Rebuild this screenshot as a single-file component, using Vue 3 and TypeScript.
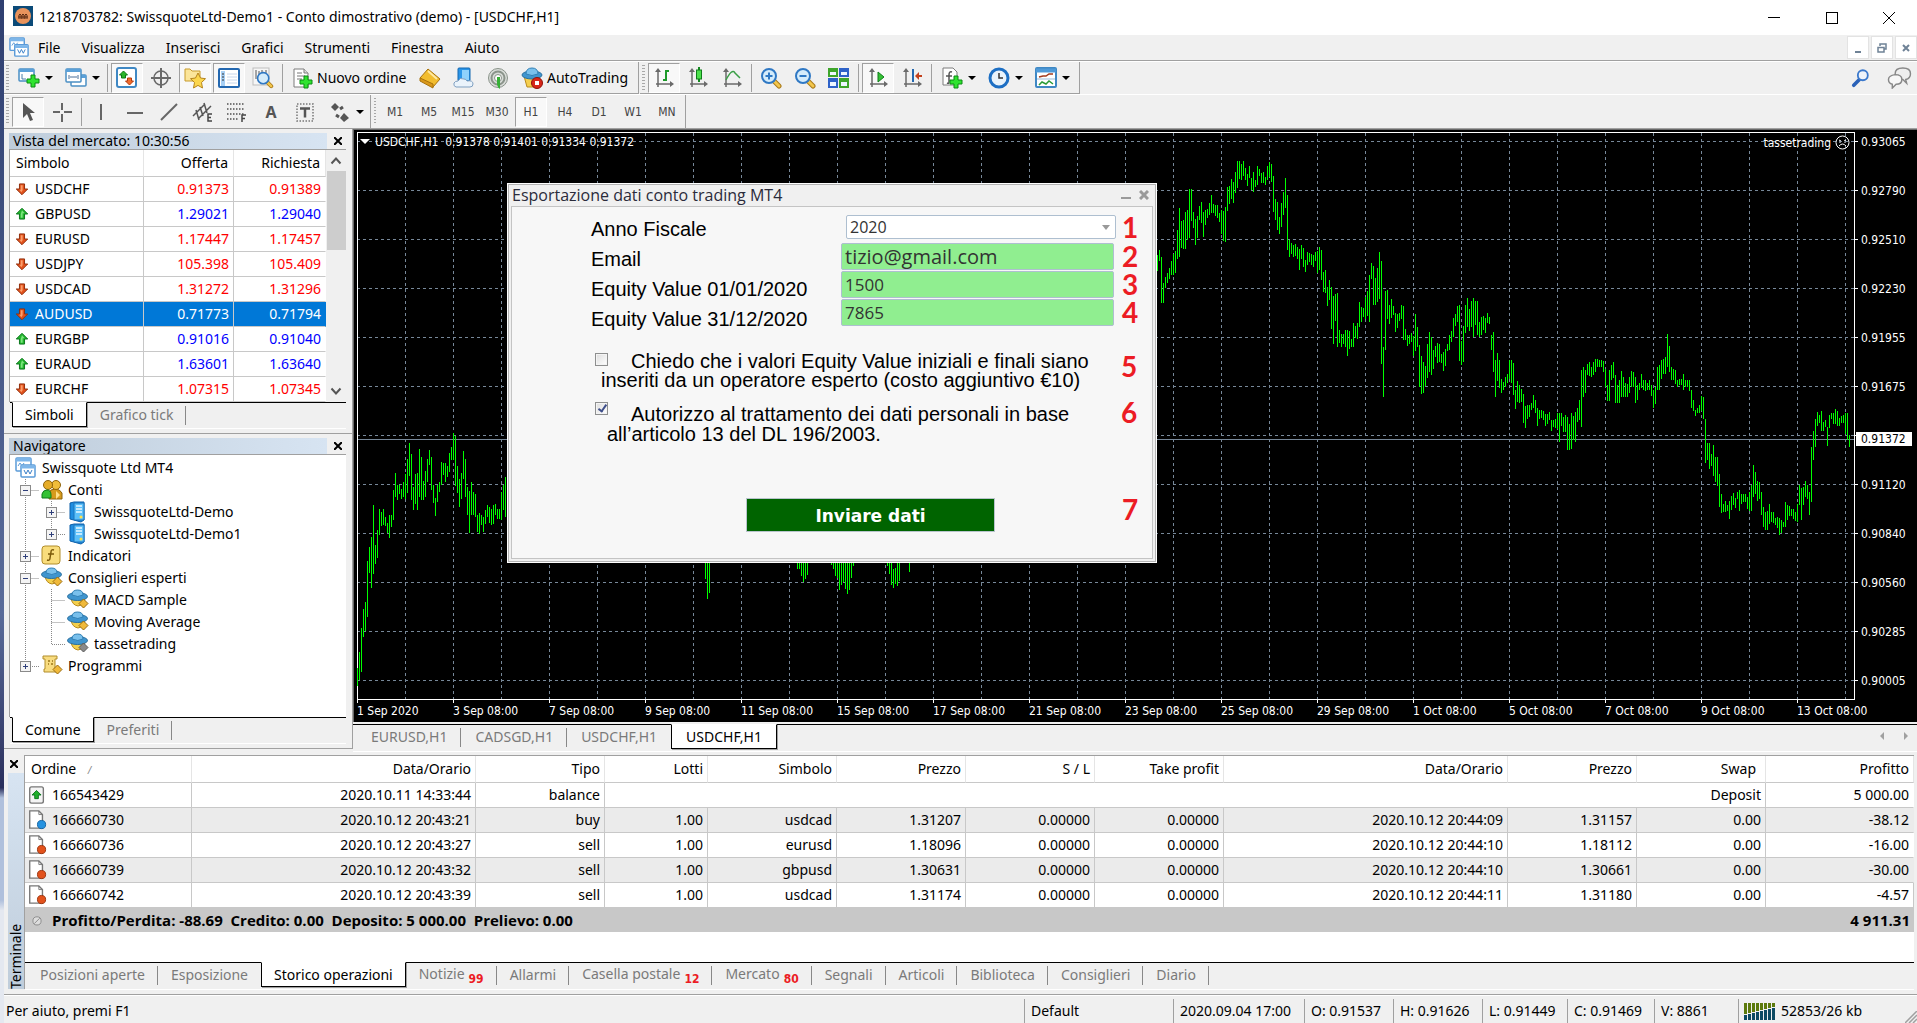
<script setup lang="ts">
import { ref } from 'vue'

/* ---------- icon drawings, all on a 22 x 22 field ---------- */
const win = (x: number, y: number, w: number, h: number) =>
  `<rect x="${x}" y="${y}" width="${w}" height="${h}" rx="1" fill="#fff" stroke="#4a8fc4" stroke-width="1.500"/><path d="M${x} ${y + 1.5}h${w}" stroke="#5aa0d8" stroke-width="3"/>`
const plus = (x: number, y: number) =>
  `<path d="M${x + 4} ${y}h4v4h4v4h-4v4h-4v-4h-4v-4h4z" fill="#2fe32f" stroke="#0a8a12"/>`
const hat = (gem: string) =>
  `<path d="M4 9q1 7 7 8q6-1 7-8z" fill="#f3cf4c" stroke="#b98a1c"/><ellipse cx="10.500" cy="7.500" rx="10" ry="4" fill="#3f95cf" stroke="#286f9f"/><path d="M5 6q0-5 5.500-5t5.500 5q-5 3-11 0z" fill="#79c0ec" stroke="#2f7fb5"/>${gem}`
const gem = (c: string, s: string) => `<path d="M16.500 10l4.500 4.500-4.500 4.500-4.500-4.500z" fill="${c}" stroke="${s}"/>`
const axes = '<path d="M5 4v16M3 17h15" stroke="#6a6a6a" stroke-width="1.500" fill="none"/><path d="M2 5l3-4 3 4zM17 14l4 3-4 3z" fill="#6a6a6a"/>'
const sheet = '<path d="M3 2h10l4 4v14h-14z" fill="#fff" stroke="#7d7d7d"/><path d="M13 2v4h4" fill="#ddd" stroke="#7d7d7d"/>'
const lens = (sign: string) =>
  `<path d="M13 13l6 6" stroke="#a87817" stroke-width="5" stroke-linecap="round"/><path d="M13 13l6 6" stroke="#f2c64c" stroke-width="3" stroke-linecap="round"/><circle cx="9" cy="9" r="7" fill="#d5ecfb" stroke="#2f78c4" stroke-width="2"/>${sign}`
const twoWin =
  '<rect x="1" y="1" width="15" height="13" rx="1" fill="#fff" stroke="#5a9ad8" stroke-width="1.500"/><path d="M1 3h15" stroke="#7db6ea" stroke-width="3"/><path d="M3 9l2-3 2 3 2-3" stroke="#5a9ad8" fill="none"/><rect x="6" y="8" width="14" height="12" rx="1" fill="#fff" stroke="#5a9ad8" stroke-width="1.500"/><path d="M6 10h14" stroke="#7db6ea" stroke-width="3"/><path d="M9 13l2 4 2-4 2 4 2-4" stroke="#3a7fc8" fill="none"/>'
const server =
  '<path d="M3 2l4-1h10v18l-3 2-11-3z" fill="#1f8de0" stroke="#0d5fa8"/><path d="M7 2h10v17h-10z" fill="#5cc0fa" stroke="#1b74bd"/><path d="M9 5h6M9 8h6M9 11h6" stroke="#e8f7ff" stroke-width="1.500"/><circle cx="14" cy="16" r="1.500" fill="#ffe14a"/>'

const icons: Record<string, string> = {
  newChart: win(1, 2, 15, 12) + '<path d="M4 7v5h4" stroke="#4a7fa8" fill="none"/>' + plus(9, 8),
  profiles: win(6, 8, 15, 11) + win(1, 2, 15, 13) + '<path d="M4 8v4M13 8v4M5 10h7" stroke="#4a6f98" fill="none"/>',
  market: '<rect x="1" y="1" width="19" height="19" rx="2" fill="#fff" stroke="#3f88c4" stroke-width="2"/><path d="M7.500 4l4 4h-2v3h-4v-3h-2z" fill="#2ab52a" stroke="#0b7a12"/><path d="M13.500 18l4-4h-2v-3h-4v3h-2z" fill="#f26b2b" stroke="#b33a0c"/>',
  cross: '<circle cx="11" cy="11" r="7" fill="none" stroke="#6a6a6a" stroke-width="1.500"/><path d="M11 1v20M1 11h20" stroke="#6a6a6a" stroke-width="2"/>',
  favorite: '<path d="M1 14v-12h5l2 2h8v10z" fill="#fbe59a" stroke="#c79b2c"/><path d="M14 6l2.500 5 5 .700-4 3.800 1 5.500-4.500-2.600-4.500 2.600 1-5.500-4-3.800 5-.700z" fill="#fbd64e" stroke="#b5841c"/>',
  window: '<rect x="1" y="2" width="20" height="18" rx="1" fill="#fff" stroke="#2468b0" stroke-width="2"/><path d="M3 4h4v15h-4z" fill="#a8d0f5"/><path d="M9 7h10M9 10h10M9 13h10M9 16h10" stroke="#c8d6ea"/><path d="M4 7h2M4 10h2M4 13h2" stroke="#333"/>',
  tester: '<rect x="1" y="1" width="16" height="17" fill="#f6f6f6" stroke="#bdbdbd"/><path d="M4 3v9M7 4v6M10 3v5M14 3v7" stroke="#555"/><g transform="translate(4 4) scale(.8)">' + lens('') + '</g>',
  order: sheet + '<path d="M6 6h5M6 9h8M6 12h5" stroke="#777"/>' + plus(9, 9),
  gold: '<path d="M1 11l8-9 12 10-7 8z" fill="#f2bd2f" stroke="#a8720c"/><path d="M1 11l13 6v4l-13-7z" fill="#d9981a" stroke="#a8720c"/><path d="M9 4l9 8" stroke="#ffe9a0" stroke-width="2"/>',
  cloud: '<rect x="5" y="1" width="12" height="13" rx="1" fill="#2a95e8" stroke="#1568b0"/><path d="M9 3h7v10h-7z" fill="#8fd2fc"/><path d="M3 20q-3-1-2-4 1-2 4-2 2-4 6-2 2 0 3 2 6-1 6 3 0 3-3 3z" fill="#eaf3fb" stroke="#7f9fc0"/>',
  signal: '<circle cx="11" cy="11" r="9.500" fill="#d8dcd8" stroke="#8a938a"/><circle cx="11" cy="11" r="6.500" fill="none" stroke="#8a938a" stroke-width="2"/><circle cx="11" cy="11" r="3.500" fill="#fff" stroke="#8a938a"/><path d="M10 10h3v12q-3-2-3-6z" fill="#35b035"/>',
  auto: '<path d="M3 9l3 11h10l3-11z" fill="#f5cf4e" stroke="#b98a1c"/><ellipse cx="11" cy="8" rx="10" ry="4" fill="#3f95cf" stroke="#286f9f"/><path d="M5 7q0-6 6-6t6 6q-6 3-12 0z" fill="#79c0ec" stroke="#2f7fb5"/><circle cx="16" cy="16" r="5.500" fill="#d8271a" stroke="#8f120a"/><rect x="14" y="14" width="4" height="4" fill="#fff"/>',
  bars: axes + '<path d="M13 3v11M10 13h3M13 4h3" stroke="#1d9a2a" stroke-width="2" fill="none"/>',
  candles: axes + '<path d="M12 0v15" stroke="#12891e" stroke-width="2"/><rect x="9.500" y="3" width="5" height="9" fill="#4be04b" stroke="#0f7d1a"/>',
  line: axes + '<path d="M5 13q6-12 9-7l5 5" stroke="#3a9e46" stroke-width="1.500" fill="none"/>',
  zoomIn: lens('<path d="M9 5.500v7M5.500 9h7" stroke="#2f78c4" stroke-width="2"/>'),
  zoomOut: lens('<path d="M5.500 9h7" stroke="#2f78c4" stroke-width="2"/>'),
  tile: '<path d="M0 1h10v9h-10z" fill="#3ea52a"/><path d="M11 1h10v9h-10z" fill="#2e62c8"/><path d="M0 11h10v10h-10z" fill="#2e62c8"/><path d="M11 11h10v10h-10z" fill="#3ea52a"/><path d="M2 5h6v3h-6zM13 5h6v3h-6zM2 15h6v4h-6zM13 15h6v4h-6z" fill="#eef6ff"/>',
  scroll: axes + '<path d="M11 5l6 5-6 5z" fill="#35c235" stroke="#0f7d1a"/>',
  shift: axes + '<path d="M12 2v13" stroke="#2468b0" stroke-width="2"/><path d="M21 9h-5" stroke="#c2401c" stroke-width="2"/><path d="M14 9l4-4v8z" fill="#c2401c"/>',
  indicator: '<path d="M2 1h10l4 4v13h-14z" fill="#fff" stroke="#7d7d7d"/><path d="M11 5q-3-1-3 3v7q0 2-2 1M5 9h6" stroke="#555" fill="none" stroke-width="1.500"/>' + plus(9, 9),
  clock: '<circle cx="11" cy="11" r="9" fill="#e9f3fb" stroke="#1d6fc4" stroke-width="3"/><path d="M11 6v5h4" stroke="#333" stroke-width="1.500" fill="none"/>',
  template: '<rect x="1" y="1" width="20" height="19" rx="1" fill="#fff" stroke="#3f88c4" stroke-width="2"/><path d="M1 3.500h20" stroke="#4f9ad8" stroke-width="4"/><path d="M4 10l4-1 3 0 3-2 4 0" stroke="#a23a1c" stroke-width="1.500" fill="none"/><path d="M2 12h18" stroke="#9bbbd8"/><path d="M4 18l3-3 4 2 3-3 4 3" stroke="#2a9a35" stroke-width="1.500" fill="none"/>',
  pointer: '<path d="M6 2v15l4-4 3 7 3-1-3-7h5z" fill="#555"/>',
  plusLine: '<path d="M11 2v7M11 13v8M2 11h7M13 11h8" stroke="#666" stroke-width="2"/>',
  vline: '<path d="M11 3v16" stroke="#666" stroke-width="2"/>',
  hline: '<path d="M3 12h16" stroke="#666" stroke-width="2"/>',
  trend: '<path d="M3 19l16-16" stroke="#666" stroke-width="2"/>',
  channel: '<path d="M1 15l12-12M6 18l13-13M4 9l3 10M8 6l3 9M12 2l3 10" stroke="#555" stroke-width="1.500" fill="none"/><path d="M20 13h-4v7h4M16 16.500h3" stroke="#444" stroke-width="1.500" fill="none"/>',
  fibo: '<path d="M1 3h18M1 8h18M1 13h18M1 18h12" stroke="#777" stroke-width="2" stroke-dasharray="1.500 1.500"/><path d="M20 14h-4v7M16 17.500h3" stroke="#444" stroke-width="1.500" fill="none"/>',
  label: '<rect x="3" y="3" width="16" height="17" fill="none" stroke="#777" stroke-dasharray="1.500 1.500" stroke-width="1.500"/><path d="M6 7.500h10M11 7.500v9" stroke="#555" stroke-width="2.500"/>',
  arrows: '<path d="M6 2l4 4-4 4-4-4zM15 12l5 5-5 4-4-4z" fill="#555"/><path d="M7 14l3 2M11 8l3-2" stroke="#555" stroke-width="3"/>',
  twoWin, server,
  accounts: '<path d="M8 20v-6q1-4 6-4t7 4v6z" fill="#d69a1c" stroke="#8f640c"/><circle cx="15" cy="6" r="4.500" fill="#f0bd3a" stroke="#8f640c"/><circle cx="7" cy="6" r="4.500" fill="#e5ac28" stroke="#8f640c"/><path d="M1 19v-4q1-4 5-4t4 5v3z" fill="#35c235" stroke="#0f7d1a"/><path d="M15 12l4 4-4 4z" fill="#ffe08a"/>',
  fx: '<rect x="1" y="1" width="18" height="18" rx="3" fill="#f9dd7c" stroke="#b18d2b"/><path d="M13 5q-3-1-3 2l-1 6q0 3-3 2M7 9h6" stroke="#7c5a0a" stroke-width="1.500" fill="none"/>',
  expert: hat(gem('#f0b93a', '#9a6c0f')),
  expertOff: hat(gem('#8a8a8a', '#5a5a5a')),
  script: '<path d="M2 1h14v3h-2v10h3v3h-14v-3h1v-10h-2z" fill="#f8dc80" stroke="#b18d2b"/><path d="M7 6h2M11 6h1M7 9h1M10 9h2" stroke="#9a7518" stroke-width="1.500"/>' + gem('#f0b93a', '#9a6c0f'),
  up: '<path d="M11 2l9 9h-5v8h-8v-8h-5z" fill="#22b52c" stroke="#08731a" stroke-width="1.500"/><path d="M11 5l4 5h-3v7h-3v-6z" fill="#7de67f"/>',
  down: '<path d="M11 20l9-9h-5v-8h-8v8h-5z" fill="#e2521c" stroke="#8f2b08" stroke-width="1.500"/><path d="M9 5h3v8l-2 3-3-4h2z" fill="#fba06d"/>',
  balance: '<rect x="3" y="2" width="15" height="18" rx="2" fill="#f4f4f4" stroke="#777" stroke-width="1.500"/><path d="M10.500 6l5 5h-3v4h-4v-4h-3z" fill="#1fae2a" stroke="#08731a"/>',
  buy: '<path d="M3 1h10l4 4v15h-14z" fill="#fff" stroke="#777" stroke-width="1.500"/><path d="M13 1v4h4" fill="none" stroke="#777"/><circle cx="16" cy="16" r="4.500" fill="#2592e0" stroke="#0f5f9f"/>',
  sell: '<path d="M3 1h10l4 4v15h-14z" fill="#fff" stroke="#777" stroke-width="1.500"/><path d="M13 1v4h4" fill="none" stroke="#777"/><circle cx="16" cy="16" r="4.500" fill="#e2521c" stroke="#96300a"/>',
  search: '<path d="M9 13l-6 6" stroke="#2a62b8" stroke-width="4" stroke-linecap="round"/><circle cx="13" cy="8" r="5.500" fill="#eef3fa" stroke="#3a78cc" stroke-width="2"/>',
  chat: '<path d="M14 1q8 0 8 6 0 5-5 6l1 4-4-4q-8 0-8-6t8-6z" fill="#eee" stroke="#888" stroke-width="1.500"/><path d="M6 8q7 0 7 5t-6 5l-4 4v-4q-4-1-4-5t7-5z" fill="#f7f7f7" stroke="#888" stroke-width="1.500"/>',
}

const menus = ['File', 'Visualizza', 'Inserisci', 'Grafici', 'Strumenti', 'Finestra', 'Aiuto']

interface Tool { icon?: string; text?: string; on?: boolean; menu?: boolean; sep?: boolean; title?: string }
const standardTools: Tool[] = [
  { icon: 'newChart', menu: true, title: 'Nuovo grafico' }, { icon: 'profiles', menu: true, title: 'Profili' }, { sep: true },
  { icon: 'market', on: true, title: 'Vista del mercato' }, { icon: 'cross', title: 'Finestra dati' },
  { icon: 'favorite', on: true, title: 'Navigatore' }, { icon: 'window', on: true, title: 'Terminale' },
  { icon: 'tester', title: 'Tester strategia' }, { sep: true },
  { icon: 'order', text: 'Nuovo ordine' }, { icon: 'gold', title: 'MetaEditor' }, { icon: 'cloud', title: 'Hosting' },
  { icon: 'signal', title: 'Segnali' }, { icon: 'auto', text: 'AutoTrading' },
]
const chartTools: Tool[] = [
  { icon: 'bars', on: true, title: 'Barre' }, { icon: 'candles', title: 'Candele' }, { icon: 'line', title: 'Linea' }, { sep: true },
  { icon: 'zoomIn', title: 'Ingrandisci' }, { icon: 'zoomOut', title: 'Riduci' }, { icon: 'tile', title: 'Affianca' }, { sep: true },
  { icon: 'scroll', on: true, title: 'Scorrimento' }, { icon: 'shift', title: 'Spostamento' }, { sep: true },
  { icon: 'indicator', menu: true, title: 'Indicatori' }, { icon: 'clock', menu: true, title: 'Periodi' }, { icon: 'template', menu: true, title: 'Modelli' },
]
const lineTools: Tool[] = [
  { icon: 'pointer', on: true, title: 'Cursore' }, { icon: 'plusLine', title: 'Mirino' }, { sep: true },
  { icon: 'vline', title: 'Linea verticale' }, { icon: 'hline', title: 'Linea orizzontale' }, { icon: 'trend', title: 'Trendline' },
  { icon: 'channel', title: 'Canale' }, { icon: 'fibo', title: 'Fibonacci' }, { text: 'A', title: 'Testo' },
  { icon: 'label', title: 'Etichetta' }, { icon: 'arrows', menu: true, title: 'Frecce' },
]
const periods = ['M1', 'M5', 'M15', 'M30', 'H1', 'H4', 'D1', 'W1', 'MN']
const period = ref('H1')

const quotes = [
  ['USDCHF', '0.91373', '0.91389', 'down'], ['GBPUSD', '1.29021', '1.29040', 'up'],
  ['EURUSD', '1.17447', '1.17457', 'down'], ['USDJPY', '105.398', '105.409', 'down'],
  ['USDCAD', '1.31272', '1.31296', 'down'], ['AUDUSD', '0.71773', '0.71794', 'down'],
  ['EURGBP', '0.91016', '0.91040', 'up'], ['EURAUD', '1.63601', '1.63640', 'up'],
  ['EURCHF', '1.07315', '1.07345', 'down'],
]
const selected = ref('AUDUSD')

/* guide: path of the dotted connectors; box: x of the expander; open: shows a minus */
interface Node { name: string; icon: string; pad: number; guide: string; box?: number; open?: boolean }
const tree: Node[] = [
  { name: 'Swissquote Ltd MT4', icon: 'twoWin', pad: 5, guide: '' },
  { name: 'Conti', icon: 'accounts', pad: 31, guide: 'M15.500 0v22M15.500 11.500h14', box: 10, open: true },
  { name: 'SwissquoteLtd-Demo', icon: 'server', pad: 57, guide: 'M15.500 0v22M41.500 0v22M41.500 11.500h14', box: 36 },
  { name: 'SwissquoteLtd-Demo1', icon: 'server', pad: 57, guide: 'M15.500 0v22M41.500 0v11.500h14', box: 36 },
  { name: 'Indicatori', icon: 'fx', pad: 31, guide: 'M15.500 0v22M15.500 11.500h14', box: 10 },
  { name: 'Consiglieri esperti', icon: 'expert', pad: 31, guide: 'M15.500 0v22M15.500 11.500h14', box: 10, open: true },
  { name: 'MACD Sample', icon: 'expert', pad: 57, guide: 'M15.500 0v22M41.500 0v22M41.500 11.500h14' },
  { name: 'Moving Average', icon: 'expert', pad: 57, guide: 'M15.500 0v22M41.500 0v22M41.500 11.500h14' },
  { name: 'tassetrading', icon: 'expertOff', pad: 57, guide: 'M15.500 0v22M41.500 0v11.500h14' },
  { name: 'Programmi', icon: 'script', pad: 31, guide: 'M15.500 0v11.500h14', box: 10 },
]

/* ---------- chart: one "high-low" pair per hourly bar, first number of a run is its bar index ---------- */
const runs: [number, string][] = [
  [0, '668-686 652-680 628-672 609-637 602-631 561-617 547-573 537-588 505-574 545-564 530-558 509-535 512-526 509-525 517-526 523-533 515-538 515-527 490-520 473-497 485-500 485-494 489-499 482-497 474-499 459-493 443-476 454-500 487-510 474-504 473-510 449-497 457-500 481-500 471-497 459-482 450-465 457-490 485-503 498-516 485-502 482-492 462-485 463-475 463-482 466-477 453-472 447-460 433-460 436-486 466-493 479-507 473-499 451-479 459-497 487-515 491-533 482-515 492-515 494-517 515-532 513-534 515-525 517-532 510-524 505-517 507-523 509-525 505-524 504-515 509-519 509-519 492-520 485-510 477-517'],
  [174, '540-579 540-599 540-593'],
  [220, '540-569 540-569 550-576 550-582 550-579 550-575'],
  [237, '540-565 540-569 550-576 550-578 550-590 550-585 550-582 550-589 550-594 550-590 550-578 550-566'],
  [265, '540-566 550-574 550-585 569-588 568-584 550-586 550-581'],
  [276, '540-572'],
  [400, '255-271 250-261 257-303 283-303 277-288 273-283 268-279 261-275 254-275 251-273 230-259 208-257 221-248 220-249 212-249 210-240 189-238 189-221 212-228 219-245 216-238 206-220 202-223 212-237 210-225 209-218 203-215 195-213 204-213 205-216 205-218 213-222 210-234 211-241 207-242 187-211 186-204 179-199 182-203 172-193 161-188 161-179 164-180 161-176 168-180 174-186 166-178 178-190 172-192 180-187 166-185 169-176 173-183 172-183 177-185 166-180 162-177 164-182 176-212 199-220 202-230 217-234 203-227 192-215 178-208 195-250 240-257 243-254 245-257 244-256 247-259 249-270 245-259 248-267 260-272 252-265 253-262 254-265 255-267 252-261 251-273 247-270 250-280 272-292 270-293 287-306 280-300 287-329 296-344 294-321 293-347 330-343 334-347 334-344 330-347 330-356 331-349 339-347 323-347 326-338'],
  [500, '323-339 302-327 307-322 308-317 297-319 291-316 275-322 263-279 266-305 278-305 268-302 252-299 261-364 347-397 291-350 290-319 305-324 299-318 306-315 313-332 314-328 313-321 305-319 306-340 329-340 335-346 335-344 333-342 336-356 314-351 327-347 345-387 356-394 362-393 366-386 344-378 332-372 337-375 350-369 346-357 343-363 344-362 354-363 352-371 349-366 344-351 335-350 331-342 318-337 314-326 306-322 305-361 341-365 326-362 305-333 298-327 309-331 301-327 298-337 301-325 301-335 322-337 317-335 316-330 318-333 313-323 317-324 335-350 332-372 360-397 353-381 360-388 379-393 382-390 377-387 374-383 360-379 360-383 363-395 390-409 381-402 385-403 389-402 394-423 406-428 405-419 405-417 403-410 395-408 400-413 408-426 410-419 410-418 411-420 414-426 414-424 412-420 420-431 420-427 419-428'],
  [600, '413-429 413-442 413-426 417-432 415-432 417-450 424-450 413-449 416-440 412-442 408-422 400-420 370-427 367-397 370-393 364-375 362-376 367-377 362-375 359-372 359-367 360-367 360-367 361-372 369-387 385-401 370-401 365-380 362-378 375-403 385-403 380-403 371-397 377-397 383-397 384-397 377-393 371-387 372-387 377-403 385-400 383-390 374-388 380-390 380-391 383-390 380-390 385-396 390-408 387-404 367-390 365-390 360-379 359-374 357-374 334-367 346-372 367-380 369-380 370-384 380-387 379-385 379-385 374-390 380-387 380-387 380-391 390-408 400-411 410-416 408-413 405-413 396-411 397-419 419-463 443-460 443-469 454-466 445-476 457-482 457-486 474-507 494-513 504-512 501-512 505-511 501-519 496-510 493-505 498-508 492-499 490-511 494-504 494-502 494-502 497-509 492-511 485-511 465-497 472-494'],
  [700, '481-501 482-499 492-515 507-527 512-530 511-530 504-524 512-522 512-523 518-525 517-528 518-535 520-533 522-527 502-527 505-520 506-516 509-516 509-519 512-521 504-522 485-505 488-520 487-505 481-497 485-499 492-515 447-502 431-460 419-447 412-426 415-423 411-431 422-431 420-427 427-446 415-428 413-419 413-424 409-424 411-426 418-426 416-423 415-423 413-434 413-440 435-447'],
]
const barPath = runs
  .map(([start, text]) =>
    text.split(' ').map((pair, i) => {
      const [top, bottom] = pair.split('-')
      return `M${(start + i) * 2 + 0.5} ${top}V${bottom}`
    }).join(''))
  .join('')
const gridX = Array.from({ length: 60 }, (_, i) => (i + 1) * 48)
const gridY = Array.from({ length: 12 }, (_, i) => 8 + i * 49)
const prices = ['0.93065', '0.92790', '0.92510', '0.92230', '0.91955', '0.91675', '', '0.91120', '0.90840', '0.90560', '0.90285', '0.90005']
const times = ['1 Sep 2020', '3 Sep 08:00', '7 Sep 08:00', '9 Sep 08:00', '11 Sep 08:00', '15 Sep 08:00', '17 Sep 08:00', '21 Sep 08:00', '23 Sep 08:00', '25 Sep 08:00', '29 Sep 08:00', '1 Oct 08:00', '5 Oct 08:00', '7 Oct 08:00', '9 Oct 08:00', '13 Oct 08:00']
const chartTabs = ['EURUSD,H1', 'CADSGD,H1', 'USDCHF,H1', 'USDCHF,H1']

const year = ref('2020')
const email = ref('tizio@gmail.com')
const equityStart = ref('1500')
const equityEnd = ref('7865')
const expertFill = ref(false)
const privacy = ref(true)

/* ---------- terminal ---------- */
const colWidths = [167, 284, 129, 103, 129, 129, 129, 129, 284, 129, 129, 148]
const heads = ['Data/Orario', 'Tipo', 'Lotti', 'Simbolo', 'Prezzo', 'S / L', 'Take profit', 'Data/Orario', 'Prezzo', 'Swap', 'Profitto']
const trades = [
  ['buy', '166660730', '2020.10.12 20:43:21', 'buy', '1.00', 'usdcad', '1.31207', '0.00000', '0.00000', '2020.10.12 20:44:09', '1.31157', '0.00', '-38.12'],
  ['sell', '166660736', '2020.10.12 20:43:27', 'sell', '1.00', 'eurusd', '1.18096', '0.00000', '0.00000', '2020.10.12 20:44:10', '1.18112', '0.00', '-16.00'],
  ['sell', '166660739', '2020.10.12 20:43:32', 'sell', '1.00', 'gbpusd', '1.30631', '0.00000', '0.00000', '2020.10.12 20:44:10', '1.30661', '0.00', '-30.00'],
  ['sell', '166660742', '2020.10.12 20:43:39', 'sell', '1.00', 'usdcad', '1.31174', '0.00000', '0.00000', '2020.10.12 20:44:11', '1.31180', '0.00', '-4.57'],
]
const terminalTabs: { name: string; count?: string; on?: boolean }[] = [
  { name: 'Posizioni aperte' }, { name: 'Esposizione' }, { name: 'Storico operazioni', on: true },
  { name: 'Notizie', count: '99' }, { name: 'Allarmi' }, { name: 'Casella postale', count: '12' },
  { name: 'Mercato', count: '80' }, { name: 'Segnali' }, { name: 'Articoli' }, { name: 'Biblioteca' },
  { name: 'Consiglieri' }, { name: 'Diario' },
]
const status: [string, number][] = [
  ['Default', 149], ['2020.09.04 17:00', 131], ['O: 0.91537', 89], ['H: 0.91626', 89],
  ['L: 0.91449', 85], ['C: 0.91469', 87], ['V: 8861', 84],
]
const traffic = Array.from({ length: 8 }, (_, i) => i)
</script>

<template>
  <div class="desktop">
    <div class="app">
      <header class="title-bar">
        <svg class="logo" width="20" height="20" viewBox="0 0 20 20"><rect width="20" height="20" fill="#0b4a78" /><circle cx="10" cy="10" r="8" fill="#e8935c" /><path d="M6 13v-4l1-1 1 1v4M9 13v-4l1-1 1 1v4M12 13v-4l1-1 1 1v4M5 11h10" stroke="#5a2c14" fill="none" /></svg>
        <h1>1218703782: SwissquoteLtd-Demo1 - Conto dimostrativo (demo) - [USDCHF,H1]</h1>
        <div class="window-controls">
          <button aria-label="Riduci a icona"><svg width="12" height="12"><path d="M0 5.500h12" stroke="#000" /></svg></button>
          <button aria-label="Ingrandisci"><svg width="12" height="12"><rect x=".5" y=".5" width="11" height="11" fill="none" stroke="#000" /></svg></button>
          <button aria-label="Chiudi"><svg width="12" height="12"><path d="M0 0l12 12M12 0l-12 12" stroke="#000" /></svg></button>
        </div>
      </header>

      <nav class="menu-bar">
        <svg class="menu-icon" width="21" height="21" viewBox="0 0 22 22" v-html="icons.twoWin" />
        <button v-for="m in menus" :key="m">{{ m }}</button>
        <div class="mdi-controls">
          <button aria-label="Riduci"><svg width="10" height="10"><path d="M2 9h6" stroke="#6f8296" stroke-width="2" /></svg></button>
          <button aria-label="Ripristina"><svg width="10" height="10"><path d="M3 3v-2h6v5h-2M1 4.500h6v4.500h-6z" stroke="#6f8296" fill="none" stroke-width="1.500" /></svg></button>
          <button aria-label="Chiudi grafico"><svg width="10" height="10"><path d="M2 2l6 6M8 2l-6 6" stroke="#6f8296" stroke-width="2" /></svg></button>
        </div>
      </nav>

      <div class="toolbars">
        <div class="tool-row">
          <div class="tool-group standard">
            <template v-for="(t, i) in standardTools" :key="i">
              <i v-if="t.sep" class="sep" />
              <button v-else class="tool" :class="{ on: t.on, menu: t.menu, wide: t.text }" :title="t.title">
                <svg width="22" height="22" viewBox="0 0 22 22" v-html="icons[t.icon!]" /><span v-if="t.text">{{ t.text }}</span>
              </button>
            </template>
          </div>
          <div class="tool-group charts">
            <template v-for="(t, i) in chartTools" :key="i">
              <i v-if="t.sep" class="sep" />
              <button v-else class="tool" :class="{ on: t.on, menu: t.menu }" :title="t.title">
                <svg width="22" height="22" viewBox="0 0 22 22" v-html="icons[t.icon!]" />
              </button>
            </template>
          </div>
          <div class="tool-end">
            <button aria-label="Cerca"><svg width="20" height="20" viewBox="0 0 22 22" v-html="icons.search" /></button>
            <button aria-label="Comunità"><svg width="28" height="22" viewBox="-3 0 26 23" v-html="icons.chat" /></button>
          </div>
        </div>
        <div class="tool-row second">
          <div class="tool-group lines">
            <template v-for="(t, i) in lineTools" :key="i">
              <i v-if="t.sep" class="sep" />
              <button v-else class="tool" :class="{ on: t.on, menu: t.menu }" :title="t.title">
                <b v-if="t.text">{{ t.text }}</b>
                <svg v-else width="22" height="22" viewBox="0 0 22 22" v-html="icons[t.icon!]" />
              </button>
            </template>
          </div>
          <div class="tool-group periods">
            <button v-for="p in periods" :key="p" class="tool" :class="{ on: p === period }" @click="period = p">{{ p }}</button>
          </div>
        </div>
      </div>

      <main>
        <aside>
          <section class="panel">
            <div class="panel-title"><h2>Vista del mercato: 10:30:56</h2><button aria-label="Chiudi vista del mercato"><svg width="8" height="8"><path d="M0 0l8 8M8 0l-8 8" stroke="#000" stroke-width="2" /></svg></button></div>
            <div class="panel-body market">
              <table>
                <colgroup><col class="c-symbol"><col class="c-bid"><col class="c-ask"></colgroup>
                <thead><tr><th>Simbolo</th><th>Offerta</th><th>Richiesta</th></tr></thead>
                <tbody>
                  <tr v-for="[name, bid, ask, dir] in quotes" :key="name" :class="[dir, { selected: name === selected }]" @click="selected = name">
                    <td><svg width="14" height="14" viewBox="0 0 22 22" v-html="icons[dir]" />{{ name }}</td><td>{{ bid }}</td><td>{{ ask }}</td>
                  </tr>
                </tbody>
              </table>
              <div class="scroll">
                <svg width="12" height="12"><path d="M1.500 8.500l4.500-5 4.500 5" fill="none" stroke="#555" stroke-width="2" /></svg>
                <i />
                <svg width="12" height="12"><path d="M1.500 3.500l4.500 5 4.500-5" fill="none" stroke="#555" stroke-width="2" /></svg>
              </div>
            </div>
            <div class="tabs"><button class="tab on">Simboli</button><button class="tab">Grafico tick</button></div>
          </section>

          <section class="panel navigator">
            <div class="panel-title"><h2>Navigatore</h2><button aria-label="Chiudi navigatore"><svg width="8" height="8"><path d="M0 0l8 8M8 0l-8 8" stroke="#000" stroke-width="2" /></svg></button></div>
            <div class="panel-body">
              <ul class="tree">
                <li v-for="n in tree" :key="n.name">
                  <svg :width="n.pad" height="22">
                    <path :d="n.guide" fill="none" stroke="#888" stroke-dasharray="1 1" />
                    <g v-if="n.box">
                      <rect :x="n.box + 0.5" y="6.500" width="10" height="10" fill="#f4f4f4" stroke="#8a8a8a" />
                      <path :d="`M${n.box + 3} 11.500h5` + (n.open ? '' : `M${n.box + 5.5} 9v5`)" stroke="#2f3f7a" />
                    </g>
                  </svg>
                  <svg width="22" height="22" viewBox="0 0 22 22" v-html="icons[n.icon]" />
                  <span>{{ n.name }}</span>
                </li>
              </ul>
            </div>
            <div class="tabs"><button class="tab on">Comune</button><button class="tab">Preferiti</button></div>
          </section>
        </aside>

        <div class="workspace">
          <section class="chart">
            <div class="chart-row">
              <div class="plot">
                <svg class="canvas" width="100%" height="100%" shape-rendering="crispEdges">
                  <g stroke="#778899" stroke-dasharray="3 3">
                    <line v-for="x in gridX" :key="x" :x1="x + 0.5" :x2="x + 0.5" y1="0" y2="100%" />
                    <line v-for="y in gridY" :key="'h' + y" x1="0" x2="100%" :y1="y + 0.5" :y2="y + 0.5" />
                  </g>
                  <line x1="0" x2="100%" y1="306.500" y2="306.500" stroke="#778899" />
                  <line x1=".5" x2=".5" y1="0" y2="100%" stroke="#fff" />
                  <g transform="translate(0 -133)"><path :d="barPath" stroke="#00ff00" /></g>
                </svg>
                <p class="quote"><svg width="10" height="6"><path d="M0 0h10l-5 5z" fill="#fff" /></svg><span>USDCHF,H1&nbsp; 0.91378 0.91401 0.91334 0.91372</span></p>
                <p class="robot">tassetrading <svg width="15" height="15" viewBox="0 0 15 15" fill="none" stroke="#fff"><circle cx="7.500" cy="7.500" r="6.500" /><path d="M4 5l2 1M11 5l-2 1M4 11q3.500-4 7 0M5 7v1M10 7v1" /></svg></p>
              </div>
              <div class="price-axis">
                <ol><li v-for="(p, i) in prices" :key="i">{{ p }}</li></ol>
                <output>0.91372</output>
              </div>
            </div>
            <ol class="time-axis"><li v-for="t in times" :key="t">{{ t }}</li></ol>

            <form class="dialog" @submit.prevent>
              <div class="dialog-title">
                <h2>Esportazione dati conto trading MT4</h2>
                <button type="button" aria-label="Riduci"><svg width="10" height="10"><path d="M0 8h10" stroke="#9a9a9a" stroke-width="2" /></svg></button>
                <button type="button" aria-label="Chiudi"><svg width="10" height="10"><path d="M1 1l8 8M9 1l-8 8" stroke="#9a9a9a" stroke-width="3" /></svg></button>
              </div>
              <div class="dialog-body">
                <div class="fields">
                  <div class="labels">
                    <label for="year">Anno Fiscale</label><label for="email">Email</label>
                    <label for="eq1">Equity Value 01/01/2020</label><label for="eq2">Equity Value 31/12/2020</label>
                  </div>
                  <div class="inputs">
                    <div class="field"><select id="year" v-model="year"><option>2020</option></select><b>1</b></div>
                    <div class="field"><input id="email" v-model="email" class="mail" type="text"><b>2</b></div>
                    <div class="field"><input id="eq1" v-model="equityStart" type="text"><b>3</b></div>
                    <div class="field"><input id="eq2" v-model="equityEnd" type="text"><b>4</b></div>
                  </div>
                </div>
                <div class="consent">
                  <input id="fill" v-model="expertFill" type="checkbox">
                  <label for="fill">Chiedo che i valori Equity Value iniziali e finali siano<br>inseriti da un operatore esperto (costo aggiuntivo €10)</label><b>5</b>
                </div>
                <div class="consent privacy">
                  <input id="privacy" v-model="privacy" type="checkbox">
                  <label for="privacy">Autorizzo al trattamento dei dati personali in base<br>all’articolo 13 del DL 196/2003.</label><b>6</b>
                </div>
                <div class="submit"><button type="submit">Inviare dati</button><b>7</b></div>
              </div>
            </form>
          </section>
          <div class="tabs chart-tabs">
            <button v-for="(t, i) in chartTabs" :key="i" class="tab" :class="{ on: i === 3 }">{{ t }}</button>
            <svg class="tab-arrows" width="28" height="10"><path d="M4 0v8l-4-4zM24 0v8l4-4z" fill="#a0a0a0" /></svg>
          </div>
        </div>
      </main>

      <section class="terminal">
        <div class="terminal-side">
          <button aria-label="Chiudi terminale"><svg width="8" height="8"><path d="M0 0l8 8M8 0l-8 8" stroke="#000" stroke-width="2" /></svg></button>
          <h2>Terminale</h2>
        </div>
        <div class="terminal-main">
          <table class="history">
            <colgroup><col v-for="(w, i) in colWidths" :key="i" :style="{ width: w + 'px' }"></colgroup>
            <thead><tr><th class="order">Ordine <i>/</i></th><th v-for="(h, i) in heads" :key="i" :class="{ swap: h === 'Swap' }">{{ h }}</th></tr></thead>
            <tbody>
              <tr>
                <td class="order"><svg width="20" height="20" viewBox="0 0 22 22" v-html="icons.balance" />166543429</td>
                <td>2020.10.11 14:33:44</td><td>balance</td><td colspan="8">Deposit</td><td>5 000.00</td>
              </tr>
              <tr v-for="[icon, id, ...cells] in trades" :key="id">
                <td class="order"><svg width="20" height="20" viewBox="0 0 22 22" v-html="icons[icon]" />{{ id }}</td>
                <td v-for="(c, i) in cells" :key="i">{{ c }}</td>
              </tr>
            </tbody>
            <tfoot>
              <tr>
                <td class="order" colspan="11"><svg width="20" height="20" viewBox="0 0 22 22"><circle cx="11" cy="12" r="4.500" fill="#ddd" stroke="#888" /><path d="M8 15l6-6" stroke="#888" /></svg>Profitto/Perdita: -88.69&nbsp; Credito: 0.00&nbsp; Deposito: 5 000.00&nbsp; Prelievo: 0.00</td>
                <td>4 911.31</td>
              </tr>
            </tfoot>
          </table>
          <div class="tabs terminal-tabs">
            <button v-for="t in terminalTabs" :key="t.name" class="tab" :class="{ on: t.on }">{{ t.name }}<sub v-if="t.count">{{ t.count }}</sub></button>
          </div>
        </div>
      </section>

      <footer>
        <span class="help">Per aiuto, premi F1</span>
        <span v-for="[text, w] in status" :key="text" class="cell" :style="{ width: w + 'px' }">{{ text }}</span>
        <span class="cell net">
          <svg width="32" height="17"><path v-for="i in traffic" :key="i" :d="`M${i * 4 + 1.5} 0v${11 - i}`" stroke="#5c7a0c" stroke-width="3" /><path v-for="i in traffic" :key="'b' + i" :d="`M${i * 4 + 1.5} ${12 - i}V17`" stroke="#0d4a63" stroke-width="3" /></svg>52853/26 kb
        </span>
        <svg class="grip" width="12" height="12"><path d="M0 12l12-12M4 12l8-8M8 12l4-4" stroke="#a0a0a0" stroke-width="1.500" /></svg>
      </footer>
    </div>
  </div>
</template>

<style>
body { background: #f0f0f0; }
</style>

<style scoped>
* { box-sizing: border-box; margin: 0; padding: 0; }
button { font: inherit; color: inherit; background: none; border: 0; }
svg { display: block; flex: none; }
h1, h2 { font: inherit; }
ol, ul { list-style: none; }
table { border-collapse: separate; border-spacing: 0; table-layout: fixed; }
th { font-weight: 400; }

.desktop {
  display: flex; min-height: 100vh; padding-left: 4px;
  background: linear-gradient(#2f3f70, #5a6c9a 60%, #2a2f5c 77%, #b0c0dc 78%, #b0c0dc 88%, #e4e8f0 89%);
  font: 14px/20px "Noto Sans", "Open Sans", sans-serif; color: #000;
}
.app { flex: 1; min-width: 0; display: flex; flex-direction: column; background: #f0f0f0; }

.title-bar { display: flex; align-items: center; height: 35px; padding-left: 9px; background: #fff; }
.title-bar h1 { flex: 1; margin-left: 6px; margin-top: -2px; }
.logo { margin-top: -3px; }
.window-controls { display: flex; }
.window-controls button { display: flex; align-items: center; justify-content: center; width: 58px; height: 32px; }
.window-controls button:last-child { width: 56px; }

.menu-bar { display: flex; align-items: center; height: 26px; padding-left: 5px; border-bottom: 1px solid #a0a0a0; }
.menu-bar > button { margin-right: 21px; }
.menu-icon { margin-right: 8px; }
.mdi-controls { display: flex; gap: 2px; margin-left: auto; }
.mdi-controls button { display: flex; align-items: center; justify-content: center; width: 22px; height: 23px; background: #fff; border: 1px solid #e3e3e3; }

.toolbars { border-bottom: 1px solid #a0a0a0; }
.tool-row { display: flex; height: 33px; border-top: 1px solid #fff; }
.tool-row.second { height: 34px; }
.tool-group { display: flex; align-items: center; padding-left: 2px; border-right: 1px solid #a0a0a0; border-bottom: 1px solid #a0a0a0; }
.second .tool-group { border-bottom: 0; }
.tool-group::before { content: ""; align-self: stretch; margin: 3px 3px 3px 0; width: 3px; background: repeating-linear-gradient(#a8a8a8 0 1px, transparent 1px 3px); }
.tool { flex: none; display: flex; align-items: center; justify-content: center; width: 32px; height: 30px; margin-right: 2px; border: 1px solid transparent; white-space: nowrap; }
.tool.on { border-color: #a0a0a0 #fff #fff #a0a0a0; background: #f8f8f8; }
.tool.menu { width: 46px; margin-right: 1px; }
.tool.menu::after { content: ""; margin-left: 5px; border: 4px solid transparent; border-top-color: #000; border-bottom: 0; }
.tool.wide { width: 126px; justify-content: flex-start; padding-left: 4px; gap: 4px; }
.tool.wide:last-child { width: 119px; }
.sep { flex: none; width: 1px; height: 28px; margin: 0 3px 0 1px; background: #a0a0a0; }
.standard { width: 635px; }
.charts { width: 440px; margin-left: 1px; }
.lines { width: 367px; }
.lines b { font-size: 16px; color: #555; }
.periods { margin-left: 1px; width: 314px; font: 12px/20px "DejaVu Sans Condensed", "DejaVu Sans", sans-serif; color: #444; }
.tool-end { display: flex; align-items: center; gap: 14px; margin-left: auto; padding-right: 4px; }

main { flex: 1; display: flex; border-bottom: 1px solid #f0f0f0; }
aside { display: flex; flex-direction: column; width: 349px; padding-bottom: 2px; }
.panel { display: flex; flex-direction: column; padding: 3px 6px 5px 5px; border-right: 1px solid #a0a0a0; border-bottom: 1px solid #a0a0a0; }
.navigator { flex: 1; }
.panel-title { display: flex; align-items: center; height: 17px; line-height: 16px; }
.panel-title h2 { flex: 1; padding-left: 4px; background: linear-gradient(90deg, #bfcddb, #d7e4f2); line-height: 16px; }
.panel-title button { padding: 0 4px 0 7px; }
.panel-body { border: solid #a0a0a0; border-width: 1px 0 0 1px; background: #fff; }
.navigator .panel-body { flex: 1; }
.market { display: flex; height: 253px; }
.market table { flex: 1; }
.c-symbol { width: 134px; }
.c-bid { width: 90px; }
.market th, .market td { height: 25px; border: solid #c8c8c8; border-width: 0 1px 1px 0; text-align: right; padding-right: 4px; line-height: 20px; }
.market th { height: 27px; border-right-color: #e5e5e5; padding-right: 5px; }
.market th:first-child { text-align: left; padding-left: 6px; }
.market td:first-child { display: flex; align-items: center; gap: 6px; padding-left: 5px; }
.market td:last-child { border-right-color: transparent; }
.down td { color: #f00; }
.up td { color: #00f; }
.market td:first-child { color: #000; }
.market .selected td { background: #0078d7; color: #fff; }
.scroll { display: flex; flex-direction: column; align-items: center; width: 20px; padding: 5px 0; background: #f0f0f0; }
.scroll i { width: 19px; height: 79px; margin: 4px 0 auto; background: #cdcdcd; }

.tabs { display: flex; height: 26px; border-top: 1px solid #000; box-shadow: 0 1px #fff; color: #7a7a7a; }
.panel .tabs { margin-left: 1px; padding-left: 2px; }
.tab { position: relative; height: 23px; padding: 0 13px; line-height: 20px; white-space: nowrap; }
.tab.on { height: 25px; margin-top: -1px; padding: 0 12px; background: #fff; color: #000; border: 1px solid #000; border-top-color: #fff; box-shadow: 1px 1px #a0a0a0; }
.tab:not(.on)::after { content: ""; position: absolute; right: 0; top: 3px; width: 1px; height: 19px; background: #888; }
.tab:has(+ .tab.on)::after { display: none; }

.tree { padding-top: 2px; }
.tree li { display: flex; align-items: center; height: 22px; }
.tree span { margin-left: 5px; }

.workspace { flex: 1; min-width: 0; display: flex; flex-direction: column; }
.chart { position: relative; flex: 1; display: flex; flex-direction: column; padding: 2px 0 0 3px; border: solid #696969; border-width: 1px 0 0 1px; background: #000; color: #fff; font: 12px/14px "DejaVu Sans Condensed", "DejaVu Sans", sans-serif; }
.chart-row { flex: 1; display: flex; }
.plot { position: relative; flex: 1; min-width: 0; border: solid #fff; border-width: 1px 1px 1px 0; }
.canvas { position: absolute; inset: 0; }
.quote, .robot { position: absolute; display: flex; align-items: center; top: 2px; white-space: nowrap; }
.quote { left: 3px; gap: 5px; }
.robot { right: 4px; gap: 4px; }
.price-axis { position: relative; width: 62px; overflow: hidden; }
.price-axis ol { margin: -15px 0 -24px; }
.price-axis li { display: flex; align-items: center; height: 49px; }
.price-axis li::before { content: ""; width: 3px; height: 1px; margin-right: 3px; background: #fff; }
.price-axis output { position: absolute; left: 1px; top: 300px; width: 56px; padding-left: 5px; background: #fff; color: #000; }
.time-axis { display: flex; height: 22px; overflow: hidden; white-space: nowrap; }
.time-axis li { flex: none; position: relative; width: 96px; padding-top: 4px; }
.time-axis li::before { content: ""; position: absolute; left: 0; top: 0; width: 1px; height: 3px; background: #fff; }
.chart-tabs { height: 27px; margin-top: 2px; padding-left: 4px; }
.chart-tabs .tab { padding: 0 14px; }
.tab-arrows { margin: 7px 9px 0 auto; }

.dialog { position: absolute; left: 153px; top: 53px; width: 650px; height: 380px; padding: 0 3px 3px; background: #f0f0f0; border: 1px solid #fff; outline: 1px solid #b4b4b4; outline-offset: -2px; color: #111; }
.dialog-title { display: flex; align-items: center; height: 22px; padding: 0 4px 0 1px; gap: 8px; }
.dialog-title h2 { flex: 1; font: 16px/20px "Open Sans", sans-serif; color: #2b2b3a; }
.dialog-body { height: 353px; padding: 7px 0 0 79px; background: #f7f7f7; border: 1px solid #c4c4c4; font: 20px/30px "Liberation Sans", sans-serif; color: #000; }
.dialog-body b { width: 16px; margin-left: 8px; font: 700 28px/28px Lato, sans-serif; color: #ec1c24; }
.fields { display: flex; }
.labels { display: flex; flex-direction: column; width: 250px; }
.field { display: flex; align-items: center; height: 28px; font: 17px/20px "Open Sans", sans-serif; }
.field select, .field input { width: 273px; height: 27px; padding: 0 3px; border: 1px solid #aebfd0; border-radius: 2px; background: #90ee90; color: #333; font: inherit; }
.field .mail { font-size: 20px; }
.field select { width: 270px; height: 24px; margin: 0 -2px 0 5px; font-size: 16px; appearance: none; background: #fff; }
.field:first-child { position: relative; height: 26px; margin-bottom: 2px; }
.field:first-child::after { content: ""; position: absolute; left: 261px; top: 11px; border: 4px solid transparent; border-top: 5px solid #999; border-bottom: 0; pointer-events: none; }
.consent { display: flex; margin: 18px 0 0 4px; line-height: 19px; }
.consent label { flex: none; width: 512px; margin-left: -7px; text-indent: 30px; white-space: nowrap; }
.consent input { flex: none; appearance: none; width: 13px; height: 13px; margin-top: 1px; background: linear-gradient(135deg, #ddd, #fff); border: 1px solid #8e8f8f; box-shadow: inset 0 0 0 1px #f4f4f4; }
.consent input:checked::after { content: ""; display: block; width: 3px; height: 7px; margin: 0 0 0 4px; border: solid #3f4f8a; border-width: 0 2px 2px 0; transform: rotate(35deg); }
.privacy { margin-top: 8px; line-height: 20px; }
.privacy input { margin-top: 4px; }
.privacy label { width: 506px; margin-left: -1px; padding-top: 6px; text-indent: 24px; }
.submit { display: flex; margin: 54px 0 0 155px; }
.submit button { width: 249px; height: 34px; padding-top: 2px; background: #006400; border: 1px solid #b8c4cc; color: #fff; font: 700 17px/20px "DejaVu Sans", sans-serif; }
.submit b { margin: -3px 0 0 127px; }

.terminal { display: flex; padding: 3px 3px 5px 3px; }
.terminal-side { display: flex; flex-direction: column; align-items: center; width: 17px; }
.terminal-side button { height: 18px; margin-right: 3px; }
.terminal-side h2 { flex: 1; width: 16px; padding-left: 3px; writing-mode: vertical-rl; transform: rotate(180deg); background: linear-gradient(#bfcddb, #d7e4f2); line-height: 16px; }
.terminal-main { flex: 1; min-width: 0; border: solid #a0a0a0; border-width: 1px 0 0 1px; background: #fff; }
.history { width: 100%; }
.history th, .history td { height: 25px; padding: 0 4px 0 0; border: solid #c8c8c8; border-width: 0 1px 1px 0; text-align: right; line-height: 20px; white-space: nowrap; }
.history th { height: 27px; border-right-color: #e5e5e5; }
.history .swap { padding-right: 9px; }
.history .order { text-align: left; padding-left: 6px; }
.history td.order { padding-left: 2px; }
.history td.order svg { display: inline-block; vertical-align: top; margin-right: 5px; }
.history i { margin-left: 8px; font-size: 10px; color: #888; }
.history tbody tr:nth-child(even) { background: #ebebeb; }
.history td:last-child, .history tr:last-child td { border-right-color: transparent; }
.history tbody tr:last-child td { height: 24px; border-right-color: #c8c8c8; border-bottom: 0; }
.history tfoot td { background: #c8c8c8; border: 0; font: 700 15px/20px "Open Sans", sans-serif; }
.terminal-tabs { height: 27px; margin-top: 30px; padding-left: 2px; background: #f0f0f0; }
.tab sub { margin-left: 4px; font: 700 12px/12px "DejaVu Sans Condensed", sans-serif; color: #ec1c24; vertical-align: -4px; }

footer { display: flex; align-items: center; height: 29px; border-top: 1px solid #a0a0a0; box-shadow: inset 0 1px #fff; padding-left: 2px; }
.help { flex: 1; margin-top: 4px; }
.cell { height: 24px; margin-top: 4px; padding-left: 6px; border-left: 1px solid #a0a0a0; line-height: 24px; white-space: nowrap; }
.net { display: flex; align-items: center; gap: 5px; width: 167px; padding-left: 5px; }
.grip { align-self: flex-end; }
</style>
